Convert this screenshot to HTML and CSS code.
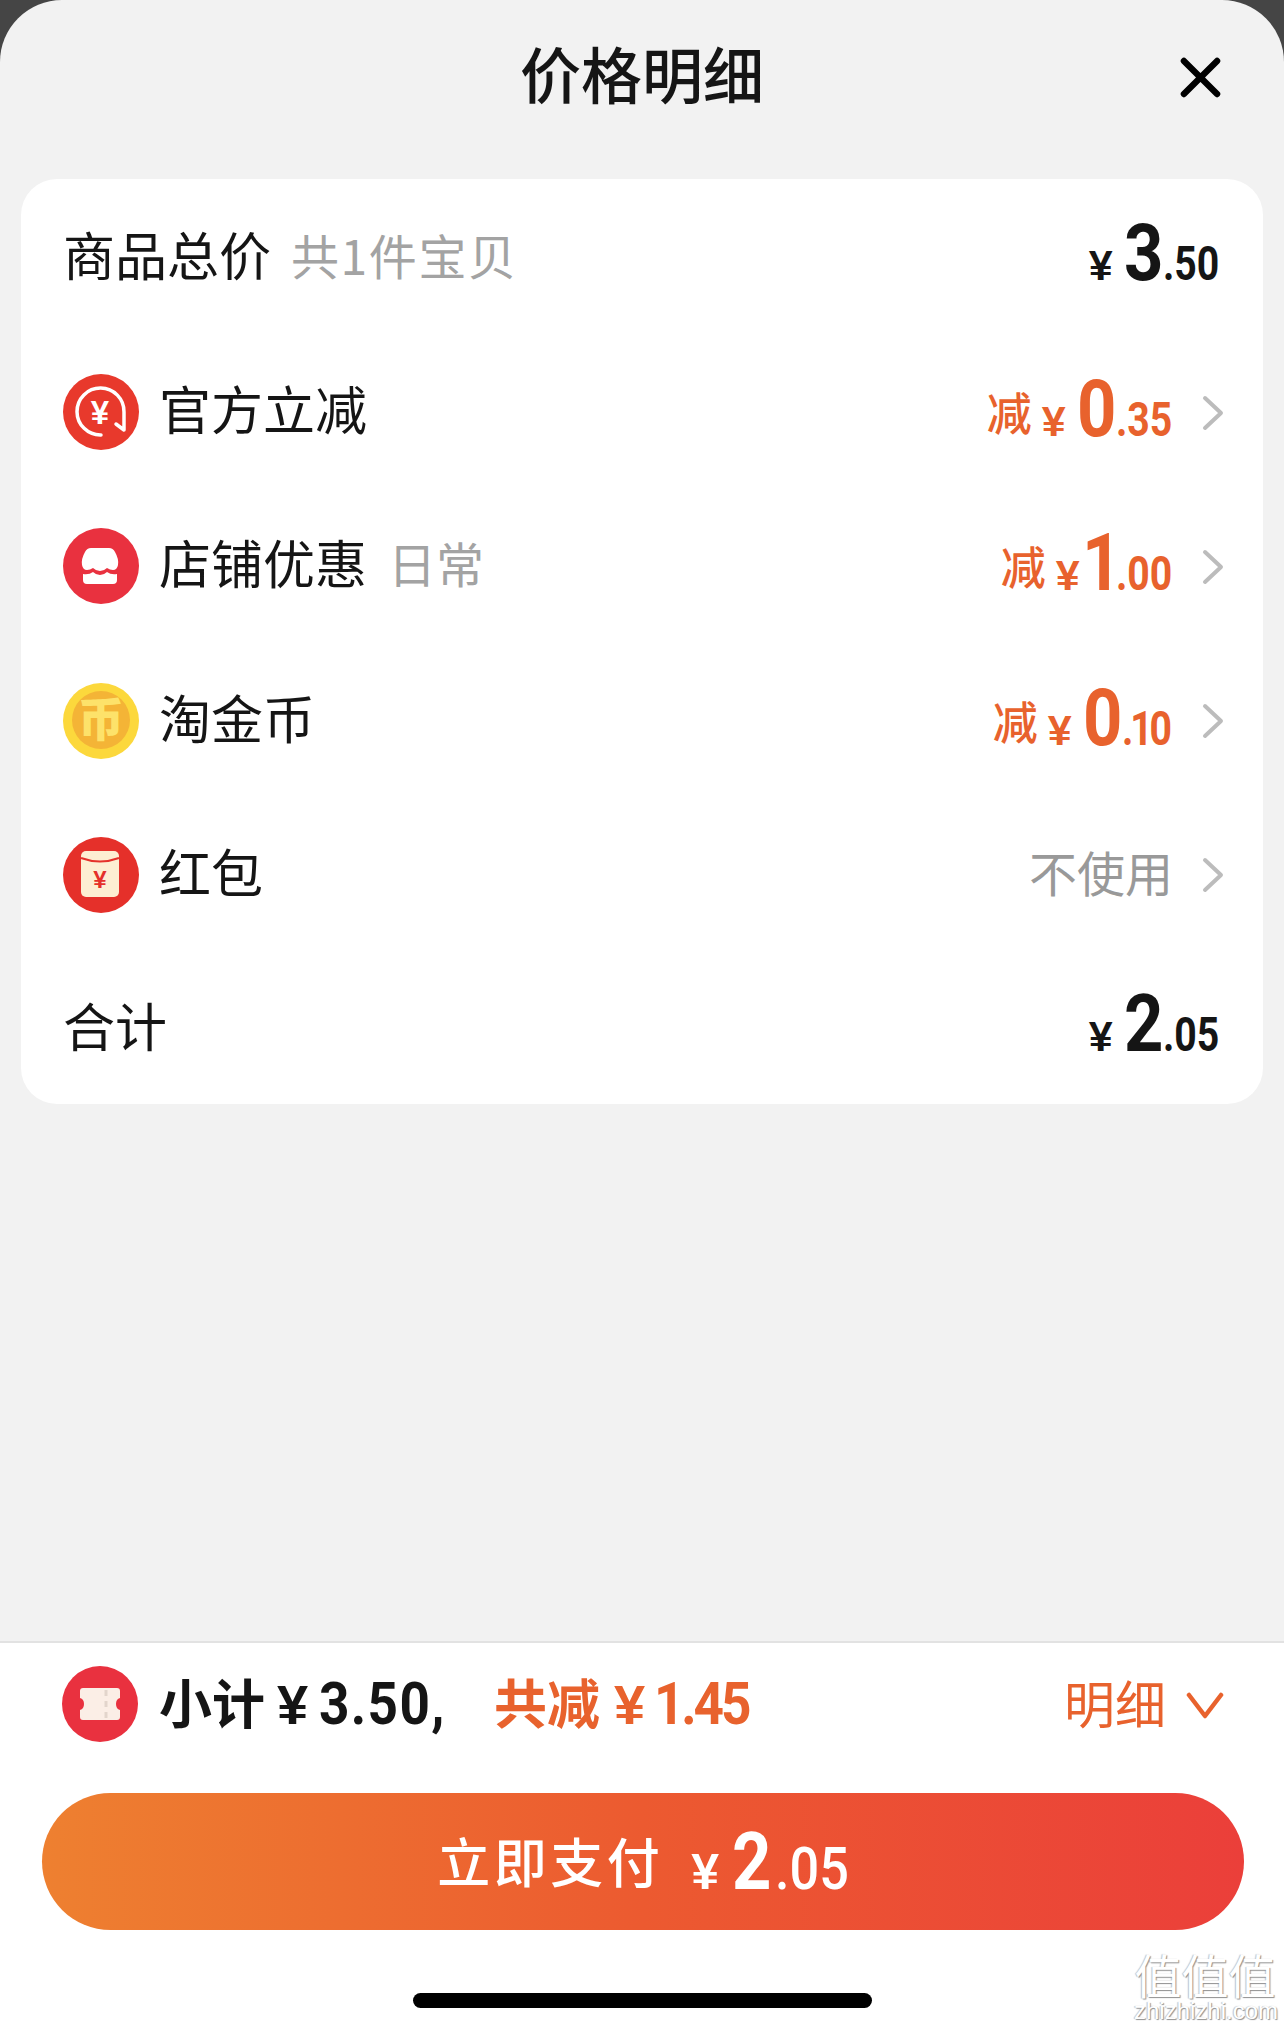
FILE: index.html
```html
<!DOCTYPE html>
<html lang="zh-CN">
<head>
    <meta charset="UTF-8">
    <meta name="viewport" content="width=device-width, initial-scale=1.0">
    <title>价格明细</title>
    <link rel="stylesheet" href="styles.css">
</head>
<body>
    <div class="sheet">
        <header class="sheet-head">
            <h1>价格明细</h1>
            <svg class="close" viewBox="0 0 42 42"><path d="M4 4 38 38M38 4 4 38"/></svg>
        </header>

        <section class="card">
            <div class="row">
                <div class="row-left">
                    <span class="label">商品总价</span>
                    <span class="note note-first">共1件宝贝</span>
                </div>
                <div class="price total"><span class="cur">¥</span><span class="big">3</span><span class="dec">.50</span></div>
            </div>

            <div class="row">
                <div class="row-left">
                    <svg class="icon" viewBox="0 0 76 76">
                        <circle cx="38" cy="38" r="38" fill="#e8392c"/>
                        <path class="icon-line" d="M38 61A23.5 23.5 0 1 1 61 38V56L53 50"/>
                        <text class="icon-yen" x="37" y="50" fill="#fff">¥</text>
                    </svg>
                    <span class="label">官方立减</span>
                </div>
                <div class="amount">
                    <div class="price off"><span class="off-word">减</span><span class="cur">¥</span><span class="big">0</span><span class="dec">.35</span></div>
                    <svg class="chevron" viewBox="0 0 22 36"><path d="M3 3 19 18 3 33"/></svg>
                </div>
            </div>

            <div class="row">
                <div class="row-left">
                    <svg class="icon" viewBox="0 0 76 76">
                        <circle cx="38" cy="38" r="38" fill="#e9313f"/>
                        <path fill="#fff" d="M28 20H46Q50 20 52 24Q56 31 55 37Q54 42 50 42Q47 42 44 40Q41 43 37 43Q33 43 30 40Q27 42 24 42Q20 42 19 37Q18 31 22 24Q24 20 28 20Z"/>
                        <path fill="#fff" d="M20 46Q26 47 30 44Q33 47 37 47Q41 47 44 44Q48 47 54 46V52Q54 56 50 56H24Q20 56 20 52Z"/>
                    </svg>
                    <span class="label">店铺优惠</span>
                    <span class="note">日常</span>
                </div>
                <div class="amount">
                    <div class="price off"><span class="off-word">减</span><span class="cur">¥</span><span class="big big-one">1</span><span class="dec">.00</span></div>
                    <svg class="chevron" viewBox="0 0 22 36"><path d="M3 3 19 18 3 33"/></svg>
                </div>
            </div>

            <div class="row">
                <div class="row-left">
                    <svg class="icon" viewBox="0 0 76 76">
                        <circle cx="38" cy="38" r="38" fill="#fcd83c"/>
                        <circle cx="38" cy="37" r="29" fill="#f4b436"/>
                        <text class="icon-coin" x="38" y="53" fill="#fde26a">币</text>
                    </svg>
                    <span class="label">淘金币</span>
                </div>
                <div class="amount">
                    <div class="price off"><span class="off-word">减</span><span class="cur">¥</span><span class="big">0</span><span class="dec dec-one">.10</span></div>
                    <svg class="chevron" viewBox="0 0 22 36"><path d="M3 3 19 18 3 33"/></svg>
                </div>
            </div>

            <div class="row">
                <div class="row-left">
                    <svg class="icon" viewBox="0 0 76 76">
                        <circle cx="38" cy="38" r="38" fill="#e5302a"/>
                        <rect x="18" y="14" width="38" height="46" rx="5" fill="#fdeed2"/>
                        <path d="M18 21Q37 28 56 21" fill="none" stroke="#e5302a" stroke-width="2"/>
                        <text class="icon-yen-small" x="37" y="51" fill="#e5302a">¥</text>
                    </svg>
                    <span class="label">红包</span>
                </div>
                <div class="amount">
                    <span class="unused-word">不使用</span>
                    <svg class="chevron" viewBox="0 0 22 36"><path d="M3 3 19 18 3 33"/></svg>
                </div>
            </div>

            <div class="row">
                <div class="row-left">
                    <span class="label">合计</span>
                </div>
                <div class="price total"><span class="cur">¥</span><span class="big">2</span><span class="dec">.05</span></div>
            </div>
        </section>

        <footer class="foot">
            <div class="summary">
                <svg class="icon" viewBox="0 0 76 76">
                    <circle cx="38" cy="38" r="38" fill="#e9313f"/>
                    <path fill="#fbeee6" d="M21 22H55Q58 22 58 25V32Q54 33 54 38Q54 43 58 44V51Q58 54 55 54H21Q18 54 18 51V44Q22 43 22 38Q22 33 18 32V25Q18 22 21 22Z"/>
                    <path d="M44 24V52" stroke="#e3d5cc" stroke-width="3" stroke-dasharray="6 5"/>
                </svg>
                <div class="sum-text sub-total">小计<span class="sum-cur">¥</span><span class="num">3.50,</span></div>
                <div class="sum-text sub-off">共减<span class="sum-cur">¥</span><span class="num num-one">1.45</span></div>
                <span class="detail">明细</span>
                <svg class="chevron-down" viewBox="0 0 38 27"><path d="M3 3 19 24 35 3"/></svg>
            </div>
            <button class="pay">
                <span class="pay-word">立即支付</span>
                <span class="price"><span class="cur">¥</span><span class="big">2</span><span class="dec">.05</span></span>
            </button>
            <div class="home-bar"></div>
        </footer>
    </div>

    <div class="watermark">
        <div class="wm-mark">值值值</div>
        <div class="wm-site">zhizhizhi.com</div>
    </div>
</body>
</html>
```

FILE: styles.css
```css
* {
    box-sizing: border-box;
}
html, body {
    margin: 0;
    height: 100%;
}
body {
    position: relative;
    background-color: #454545;
    font-family: "Noto Sans CJK SC", "Liberation Sans", sans-serif;
    color: #111;
    overflow: hidden;
}
.sheet {
    height: 2031px;
    display: flex;
    flex-direction: column;
    background-color: #f2f2f2;
    border-radius: 62px 62px 0 0;
    overflow: hidden;
}
.sheet-head {
    position: relative;
    height: 179px;
    flex-shrink: 0;
}
h1 {
    margin: 0;
    padding-top: 28px;
    text-align: center;
    font-size: 61px;
    line-height: 90px;
    font-weight: 500;
    color: #151515;
}
.close {
    position: absolute;
    top: 57px;
    right: 63px;
    width: 41px;
    height: 41px;
    fill: none;
    stroke: #000;
    stroke-width: 6.5;
    stroke-linecap: round;
}
.card {
    margin: 0 21px;
    height: 925px;
    flex-shrink: 0;
    background: #fff;
    border-radius: 36px;
    display: flex;
    flex-direction: column;
}
.row {
    flex: 1;
    display: flex;
    align-items: center;
    justify-content: space-between;
    padding: 0 43px 0 42px;
}
.row-left {
    display: flex;
    align-items: center;
}
.label {
    font-size: 52px;
    line-height: 70px;
    margin-bottom: 4px;
    color: #151515;
}
.note {
    margin-left: 21px;
    margin-bottom: 4px;
    font-size: 48px;
    line-height: 70px;
    color: #a3a3a3;
}
.note-first {
    margin-left: 20px;
    letter-spacing: 1.6px;
}
.icon {
    display: block;
    width: 76px;
    height: 76px;
    flex-shrink: 0;
    margin-top: 4px;
    margin-right: 20px;
}
.icon-line {
    fill: none;
    stroke: #fff;
    stroke-width: 3.5;
    stroke-linecap: round;
    stroke-linejoin: round;
}
.icon-yen {
    font-family: "Liberation Sans", sans-serif;
    font-size: 33px;
    font-weight: 700;
    text-anchor: middle;
}
.icon-yen-small {
    font-family: "Liberation Sans", sans-serif;
    font-size: 24px;
    font-weight: 700;
    text-anchor: middle;
}
.icon-coin {
    font-size: 46px;
    font-weight: 900;
    text-anchor: middle;
}

/* price digits: squeezed a bit, nothing installed is as narrow as the original */
.amount {
    display: flex;
    align-items: center;
}
.price {
    display: flex;
    align-items: baseline;
    font-family: Roboto, "Liberation Sans", sans-serif;
    transform: translateY(-3px);
}
.cur {
    font-family: "Liberation Sans", sans-serif;
    font-weight: 700;
    font-size: 43px;
    margin-right: 11px;
}
.big {
    display: inline-block;
    font-size: 79px;
    line-height: 90px;
    font-weight: 700;
    transform: scaleX(.87);
    transform-origin: left;
    margin-right: -.073em;
}
.big-one {
    margin-left: -9px;
    margin-right: calc(-.073em - 5px);
}
.dec {
    display: inline-block;
    font-size: 49px;
    font-weight: 700;
    transform: scaleX(.8);
    transform-origin: left;
    margin-right: -.278em;
}
.dec-one {
    letter-spacing: -4px;
    margin-right: calc(-.278em + 6px);
}
.total {
    color: #151515;
}
.off {
    color: #e8622d;
    transform: translateY(-1px);
}
.off-word {
    font-family: "Noto Sans CJK SC", sans-serif;
    font-size: 45px;
    font-weight: 500;
    margin-right: 10px;
    transform: translateY(-5px);
}
.unused-word {
    font-size: 48px;
    line-height: 70px;
    margin-bottom: 4px;
    color: #999;
}
.chevron {
    width: 22px;
    height: 36px;
    margin-top: 5px;
    margin-left: 29px;
    margin-right: -4px;
    fill: none;
    stroke: #bcbcbc;
    stroke-width: 4;
    stroke-linecap: round;
    stroke-linejoin: round;
}

/* bottom bar */
.foot {
    margin-top: auto;
    height: 390px;
    flex-shrink: 0;
    background: #fff;
    border-top: 2px solid #e2e2e2;
    display: flex;
    flex-direction: column;
}
.summary {
    height: 150px;
    flex-shrink: 0;
    display: flex;
    align-items: center;
    padding: 0 60px 29px 62px;
}
.summary .icon {
    margin-top: 0;
    margin-right: 21px;
}
.sum-text {
    display: flex;
    align-items: baseline;
    font-size: 53px;
    font-weight: 700;
    margin-bottom: 5px;
}
.sum-cur {
    font-family: "Liberation Sans", sans-serif;
    font-weight: 700;
    font-size: 56px;
    margin: 0 11px 0 12px;
}
.num {
    display: inline-block;
    font-family: Roboto, "Liberation Sans", sans-serif;
    font-weight: 700;
    font-size: 59px;
    letter-spacing: 1.5px;
    transform: scaleX(.9);
    transform-origin: left;
    margin-right: -.2em;
}
.num-one {
    letter-spacing: -3.5px;
}
.sub-total {
    color: #151515;
}
.sub-off {
    margin-left: 46px;
    color: #e8622d;
}
.sub-off .sum-cur {
    margin-left: 14px;
    margin-right: 9px;
}
.detail {
    margin-left: auto;
    margin-bottom: 3px;
    font-size: 51px;
    font-weight: 400;
    color: #e8622d;
}
.chevron-down {
    width: 38px;
    height: 27px;
    margin-top: 4px;
    margin-left: 20px;
    fill: none;
    stroke: #e8622d;
    stroke-width: 4.5;
    stroke-linecap: round;
    stroke-linejoin: round;
}
.pay {
    margin: 0 40px 0 42px;
    height: 137px;
    flex-shrink: 0;
    border: none;
    border-radius: 69px;
    background: linear-gradient(to right, #ee8030, #ec5a30 50%, #eb3f3a);
    color: #fff;
    display: flex;
    align-items: center;
    justify-content: center;
    padding: 0;
}
.pay-word {
    font-family: "Noto Sans CJK SC", sans-serif;
    font-size: 53px;
    font-weight: 500;
    letter-spacing: 3.5px;
    margin-right: 28px;
    margin-bottom: 3px;
}
.pay .price {
    transform: translateY(0);
}
.pay .cur {
    font-size: 50px;
    margin-right: 13px;
}
.pay .big {
    margin-right: calc(-.073em + 3px);
}
.pay .dec {
    font-size: 60px;
    font-weight: 500;
    transform: scaleX(.87);
    margin-right: -.18em;
}
.home-bar {
    width: 459px;
    height: 15px;
    margin: 63px auto 0;
    border-radius: 8px;
    background: #000;
}

/* site stamp over the corner */
.watermark {
    position: absolute;
    right: 8px;
    bottom: 8px;
    width: 142px;
    text-align: center;
    color: #fff;
    text-shadow: 1px 1px 1px #8f8f8f, -1px 0 1px #c0c0c0;
}
.wm-mark {
    font-size: 47px;
    line-height: 50px;
}
.wm-site {
    font-family: "Liberation Sans", sans-serif;
    font-size: 24px;
    line-height: 24px;
}
```
